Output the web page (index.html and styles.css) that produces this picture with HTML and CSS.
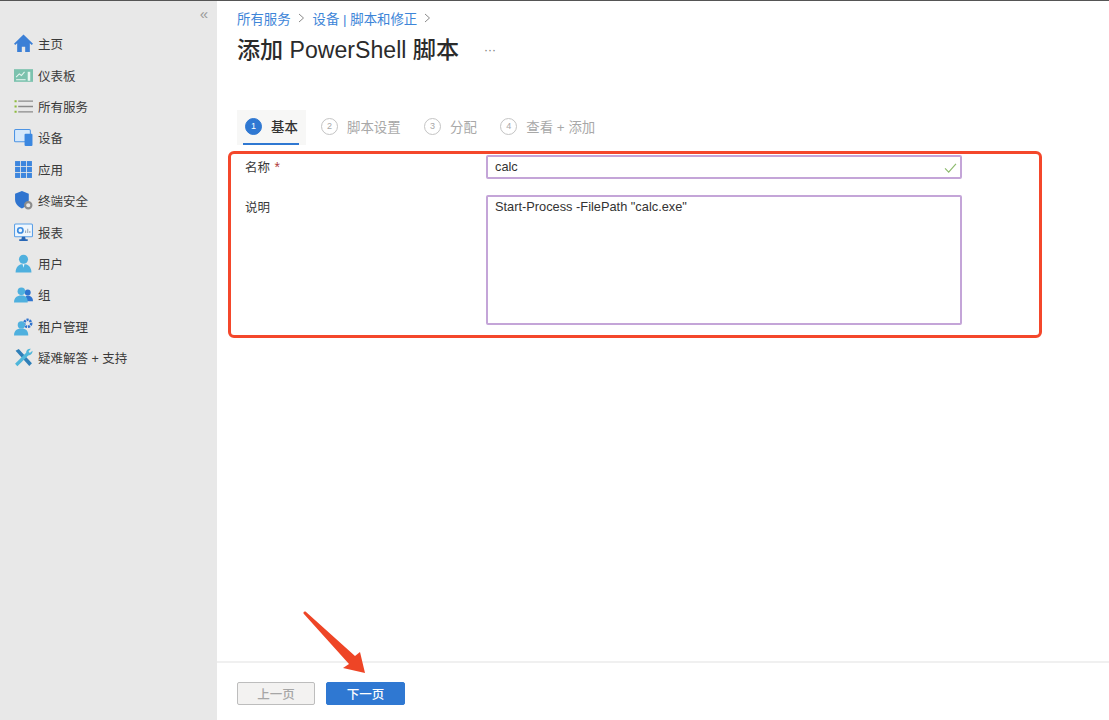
FILE: index.html
```html
<!DOCTYPE html>
<html lang="zh-CN">
<head>
<meta charset="utf-8">
<title>添加 PowerShell 脚本</title>
<link rel="stylesheet" href="styles.css">
</head>
<body>
<div class="app">
  <aside class="sidebar">
    <div class="collapse">«</div>
    <nav class="nav">
      <div class="nav-item"><svg class="ico" viewBox="0 0 18 18"><path d="M9 .5 0 9.200 1.200 10.400 3 8.800V17h4.400v-5h3.200v5H15V8.800l1.800 1.600L18 9.200z" fill="#3b7fd6"/></svg><span>主页</span></div>
      <div class="nav-item"><svg class="ico" viewBox="0 0 18 18"><rect x="0" y="3" width="18" height="12" fill="#7cc2ae"/><path d="M2 10.500l3-3 2 1.500 3-3.500" fill="none" stroke="#e8f6f1" stroke-width="1"/><path d="M2 13h9" stroke="#e8f6f1" stroke-width="1"/><rect x="13" y="5.500" width="2.400" height="8.500" fill="#e8f6f1"/></svg><span>仪表板</span></div>
      <div class="nav-item"><svg class="ico" viewBox="0 0 18 18"><path d="M4 4h14M4 9h14M4 14h14" stroke="#8a8a8a" stroke-width="1.200"/><path d="M0.500 4h2M0.500 9h2M0.500 14h2" stroke="#8dbb3c" stroke-width="2"/></svg><span>所有服务</span></div>
      <div class="nav-item"><svg class="ico" viewBox="0 0 18 18"><rect x="0.500" y="1.500" width="15" height="11.500" rx="1" fill="#d5e8fb" stroke="#4d94e4"/><rect x="10" y="5.500" width="7.500" height="11.500" rx="1" fill="#3b87e0"/></svg><span>设备</span></div>
      <div class="nav-item"><svg class="ico" viewBox="0 0 18 18"><g fill="#3d86de"><rect x="1" y="1" width="4.800" height="4.800"/><rect x="6.600" y="1" width="4.800" height="4.800"/><rect x="12.200" y="1" width="4.800" height="4.800"/><rect x="1" y="6.600" width="4.800" height="4.800"/><rect x="6.600" y="6.600" width="4.800" height="4.800"/><rect x="12.200" y="6.600" width="4.800" height="4.800"/><rect x="1" y="12.200" width="4.800" height="4.800"/><rect x="6.600" y="12.200" width="4.800" height="4.800"/><rect x="12.200" y="12.200" width="4.800" height="4.800"/></g></svg><span>应用</span></div>
      <div class="nav-item"><svg class="ico" viewBox="0 0 18 18"><path d="M7.500 0 14 2.500v5.500c0 4-3 7-6.500 8.500C4 15 1 12 1 8V2.500z" fill="#2f74cf"/><circle cx="13.500" cy="13.500" r="3" fill="#e8e8e8" stroke="#8c8c8c" stroke-width="2"/></svg><span>终端安全</span></div>
      <div class="nav-item"><svg class="ico" viewBox="0 0 18 18"><rect x="0.500" y="1" width="17" height="12" rx="1" fill="#eef6fd" stroke="#5a9fe6"/><circle cx="6" cy="7" r="2.500" fill="none" stroke="#3c8ce0" stroke-width="1.600"/><path d="M11 9.500V7M13 9.500V5.500M15 9.500V7.500" stroke="#9aa9b8"/><path d="M7.500 13h3l.5 2.500h2V17H5v-1.500h2z" fill="#2766b5"/></svg><span>报表</span></div>
      <div class="nav-item"><svg class="ico" viewBox="0 0 18 18"><circle cx="9" cy="5" r="4.300" fill="#4fb0de"/><path d="M1.500 17.500c0-5 3-8 7.500-8s7.500 3 7.500 8z" fill="#4fb0de"/><path d="M8 9.500h2l-1 3.500z" fill="#e8f6fc"/></svg><span>用户</span></div>
      <div class="nav-item"><svg class="ico" viewBox="0 0 18 18"><circle cx="13" cy="7" r="2.800" fill="#2f74cf"/><path d="M10 15.500c0-3 1-5.500 3-5.500s5 1.500 5 5.500z" fill="#2f74cf"/><circle cx="7" cy="6" r="3.600" fill="#4fb0de"/><path d="M0 16.500c0-4 2.500-6.500 7-6.500s6 2.500 6 6.500z" fill="#4fb0de"/></svg><span>组</span></div>
      <div class="nav-item"><svg class="ico" viewBox="0 0 18 18"><circle cx="13" cy="6" r="3.300" fill="none" stroke="#2f74cf" stroke-width="2.400" stroke-dasharray="2 .8"/><circle cx="7" cy="7.500" r="3.500" fill="#4fb0de"/><path d="M0 17.500c0-4 2.500-6.500 7-6.500s6.500 2.500 6.500 6.500z" fill="#4fb0de"/></svg><span>租户管理</span></div>
      <div class="nav-item"><svg class="ico" viewBox="0 0 18 18"><path d="M1.500 2.500l3-1.500 12.500 13.500-2.500 2.500z" fill="#2f7fb8"/><path d="M1 15 11.500 4.500C11.500 2 13.500.5 16 .8L13.800 3.300l1.200 1.400 2.500-2c.3 2.500-1.500 4.300-4 4.300L3.200 17.200z" fill="#4fb6da"/></svg><span>疑难解答 + 支持</span></div>
    </nav>
  </aside>
  <main class="main">
    <div class="content">
      <div class="breadcrumb"><a>所有服务</a><svg class="chev" viewBox="0 0 7 10"><path d="M1 1l4.500 4L1 9" fill="none" stroke="#8a8a8a"/></svg><a>设备 | 脚本和修正</a><svg class="chev" viewBox="0 0 7 10"><path d="M1 1l4.500 4L1 9" fill="none" stroke="#8a8a8a"/></svg></div>
      <div class="title-row"><h1>添加 PowerShell 脚本</h1><span class="more">···</span></div>
      <div class="tabs">
        <div class="tab active"><span class="num">1</span><span class="tab-text">基本</span></div>
        <div class="tab"><span class="num">2</span><span class="tab-text">脚本设置</span></div>
        <div class="tab"><span class="num">3</span><span class="tab-text">分配</span></div>
        <div class="tab"><span class="num">4</span><span class="tab-text">查看 + 添加</span></div>
      </div>
      <div class="form">
        <div class="row">
          <div class="label">名称 <span class="req">*</span></div>
          <div class="field input"><span>calc</span><svg class="check" viewBox="0 0 14 11"><path d="M1 6l4 4 8-9" fill="none" stroke="#8dbb6e" stroke-width="1.300"/></svg></div>
        </div>
        <div class="row">
          <div class="label">说明</div>
          <div class="field textarea">Start-Process -FilePath "calc.exe"</div>
        </div>
      </div>
    </div>
    <footer class="footer">
      <button class="btn prev">上一页</button>
      <button class="btn next">下一页</button>
    </footer>
  </main>
</div>
<div class="highlight"></div>
<svg class="arrow" viewBox="0 0 63 66"><path d="M.5 3.500Q0 1 2.500 1.500L52 46 57 42 62 63 40 58 46 54z" fill="#ee4526"/></svg>
</body>
</html>
```
FILE: styles.css
```css
* { box-sizing: border-box; }
html, body { margin: 0; height: 100%; }
body {
  position: relative;
  width: 1109px;
  height: 720px;
  overflow: hidden;
  background: #fff;
  font-family: "Liberation Sans", "Noto Sans CJK SC", sans-serif;
  color: #333;
}
.app {
  display: flex;
  height: 720px;
  border-top: 1px solid #555;
}
.sidebar {
  width: 217px;
  flex: none;
  background: #e8e8e8;
  padding: 4px 0 0 14px;
}
.collapse {
  height: 22px;
  padding-right: 9px;
  text-align: right;
  font-size: 15px;
  line-height: 18px;
  color: #9a9a9a;
}
.nav { display: flex; flex-direction: column; margin-top: 1px; }
.nav-item {
  height: 31.4px;
  display: flex;
  align-items: center;
  gap: 5px;
  font-size: 12.5px;
  color: #3a3a3a;
}
.ico { width: 19px; height: 19px; flex: none; }
.main {
  flex: 1;
  display: flex;
  flex-direction: column;
  min-width: 0;
}
.content { flex: 1; padding: 0 0 0 20px; }
.breadcrumb {
  display: flex;
  align-items: center;
  gap: 7px;
  height: 34px;
  font-size: 13.4px;
  color: #3d85d8;
  padding-bottom: 1px;
}
.chev { width: 7px; height: 10px; }
.chev + a { margin-left: 1px; }
.title-row {
  display: flex;
  align-items: center;
  height: 30px;
}
h1 {
  margin: 0;
  font-size: 23.1px;
  font-weight: 500;
  line-height: 30px;
  color: #2b2b2b;
}
.more {
  margin-left: 25px;
  font-size: 12px;
  color: #777;
}
.tabs {
  display: flex;
  margin-top: 45px;
  height: 35px;
  gap: 23.5px;
  color: #a8a8a8;
  font-size: 13.4px;
}
.tab {
  display: flex;
  align-items: center;
  gap: 9px;
  padding: 0 0 2px;
  position: relative;
}
.tab-text { margin-bottom: 2px; }
.tab.active {
  width: 69px;
  margin-right: -8.5px;
  padding-left: 8px;
  background: #f7f7f6;
  color: #333;
  font-weight: 500;
}
.tab.active::after {
  content: "";
  position: absolute;
  left: 6px;
  right: 7px;
  bottom: 0;
  height: 2px;
  background: #2f78d2;
}
.num {
  width: 17px;
  height: 17px;
  flex: none;
  border-radius: 50%;
  border: 1px solid #c4c4c4;
  font-size: 9px;
  line-height: 15px;
  text-align: center;
  color: #a8a8a8;
}
.active .num {
  background: #2f78d2;
  border-color: #2f78d2;
  color: #fff;
}
.form {
  padding: 10px 0 0 8px;
}
.row {
  display: flex;
  margin-bottom: 16px;
}
.label {
  width: 241px;
  flex: none;
  font-size: 12.5px;
  padding-top: 5px;
  line-height: 16px;
  height: 21px;
  color: #3a3a3a;
}
.req { color: #b03a3a; font-size: 14px; line-height: 1; margin-left: 1px; }
.field {
  width: 476px;
  border: 2px solid #c4a5d8;
  border-radius: 2px;
  font-size: 12.8px;
  color: #333;
  padding: 0 7px;
}
.input {
  height: 24px;
  display: flex;
  align-items: center;
  justify-content: space-between;
  padding: 0 3px 2px 7px;
}
.check { width: 13px; height: 10px; margin-top: 3px; }
.textarea {
  height: 130px;
  padding-top: 2px;
  line-height: 16px;
}
.footer {
  height: 59px;
  flex: none;
  border-top: 2px solid #f0f0f0;
  padding: 19px 0 0 20px;
  display: flex;
  align-items: flex-start;
  gap: 11px;
}
.btn {
  height: 23px;
  padding: 0;
  font: 500 12.5px "Liberation Sans", "Noto Sans CJK SC", sans-serif;
  border-radius: 2px;
}
.prev {
  width: 78px;
  background: #f3f2f1;
  border: 1px solid #bdbdbd;
  color: #a6a6a6;
}
.next {
  width: 79px;
  background: #2f78d2;
  border: 1px solid #2f78d2;
  color: #fff;
}
.highlight {
  position: absolute;
  left: 228px;
  top: 151px;
  width: 814px;
  height: 187px;
  border: 3px solid #f4472b;
  border-radius: 6px;
  pointer-events: none;
}
.arrow {
  position: absolute;
  left: 303px;
  top: 610px;
  width: 63px;
  height: 66px;
}
```
